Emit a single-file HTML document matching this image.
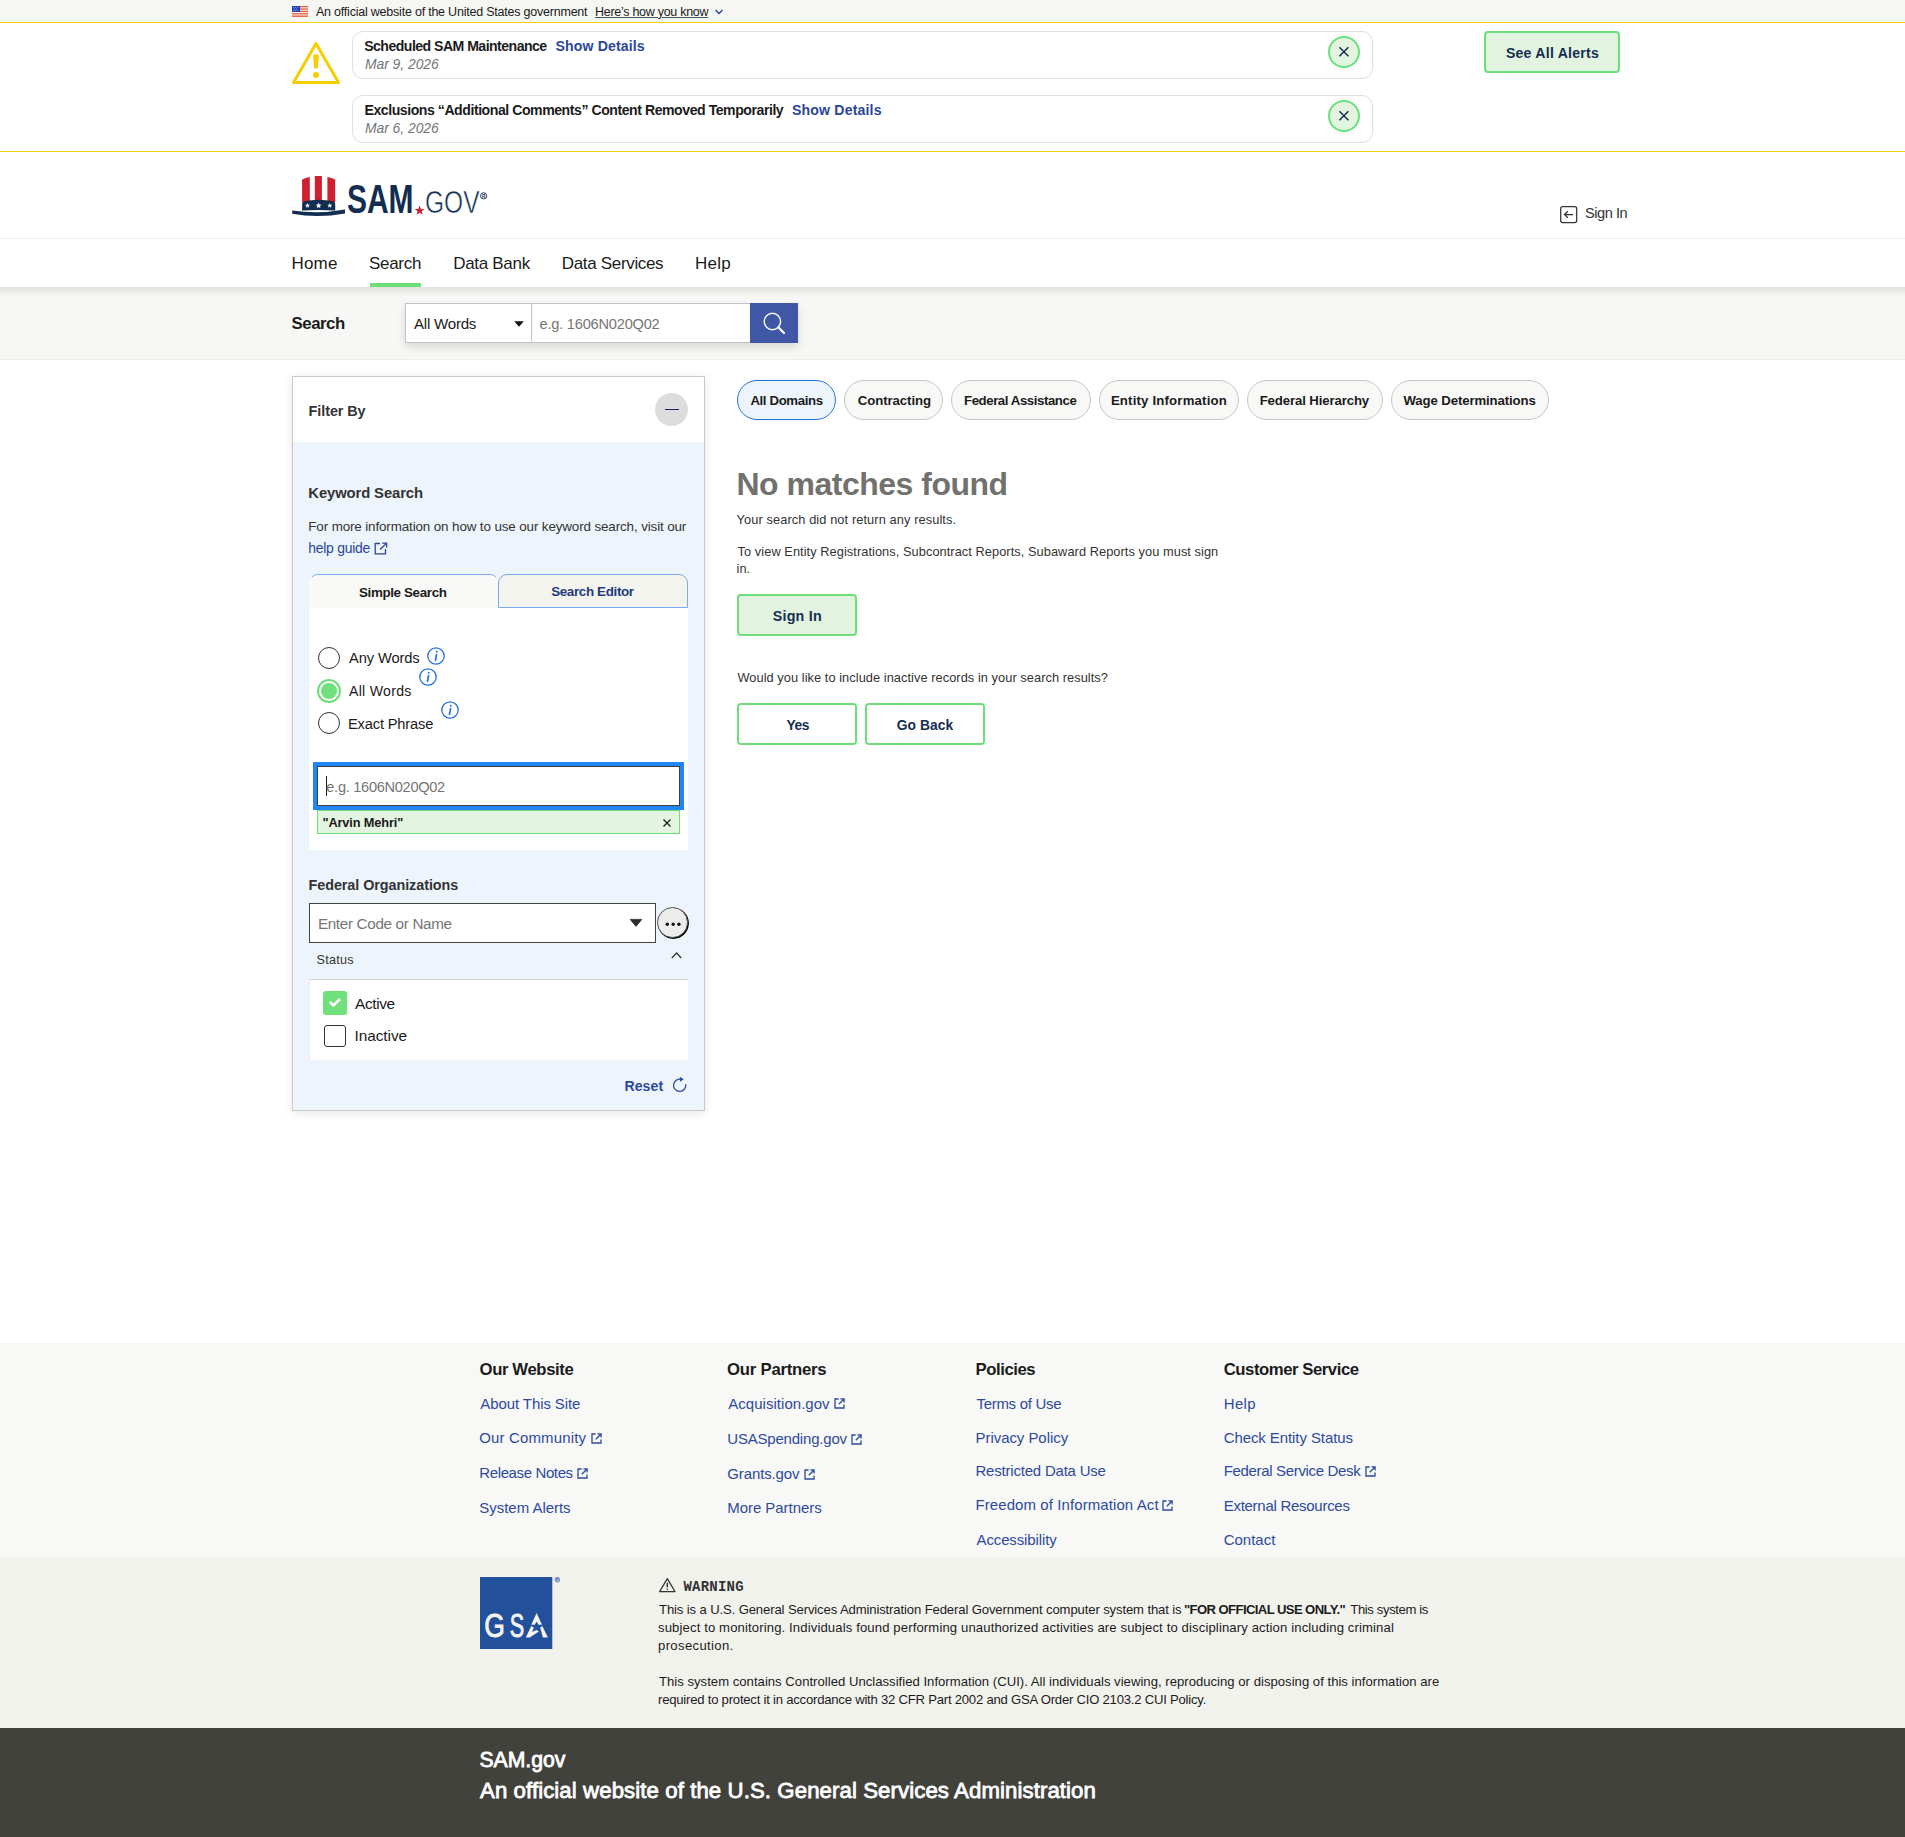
<!DOCTYPE html>
<html><head><meta charset="utf-8"><title>SAM.gov | Search</title>
<style>
*{box-sizing:border-box;margin:0;padding:0}
html,body{width:1905px;height:1837px;overflow:hidden;background:#fff}
body{position:relative;font-family:"Liberation Sans",sans-serif;color:#1b1b1b}
.a{position:absolute;white-space:nowrap}
svg.a{overflow:visible}
</style></head>
<body>
<!-- gov banner -->
<div class="a" style="left:0;top:0;width:1905px;height:22px;background:#f6f6f2"></div>
<div class="a" style="left:0;top:22px;width:1905px;height:1px;background:#f9cf0b"></div>
<svg class="a" style="left:292px;top:6px" width="16" height="11" viewBox="0 0 16 11">
<rect width="16" height="11" fill="#fff"/>
<g fill="#dc4a26"><rect y="0" width="16" height="0.9"/><rect y="1.7" width="16" height="0.9"/><rect y="3.4" width="16" height="0.9"/><rect y="5.1" width="16" height="0.9"/><rect y="6.9" width="16" height="0.9"/><rect y="8.6" width="16" height="0.9"/><rect y="10.2" width="16" height="0.8"/></g>
<rect width="8" height="6" fill="#1f3fae"/>
<g fill="#fff"><circle cx="1.6" cy="1.3" r=".45"/><circle cx="3.6" cy="1.3" r=".45"/><circle cx="5.6" cy="1.3" r=".45"/><circle cx="2.6" cy="3" r=".45"/><circle cx="4.6" cy="3" r=".45"/><circle cx="1.6" cy="4.7" r=".45"/><circle cx="3.6" cy="4.7" r=".45"/><circle cx="5.6" cy="4.7" r=".45"/></g>
</svg>
<svg class="a" style="left:714px;top:8px" width="10" height="8" viewBox="0 0 10 8"><path d="M1.5 2 L5 5.5 L8.5 2" fill="none" stroke="#2a4699" stroke-width="1.4"/></svg>

<!-- alerts -->
<svg class="a" style="left:290px;top:40px" width="52" height="46" viewBox="0 0 52 46">
<path d="M26 3.6 L48.5 42.5 L3.5 42.5 Z" fill="none" stroke="#f8cd00" stroke-width="3" stroke-linejoin="round"/>
<path d="M23.1 15.6 Q26 12.9 28.9 15.6 L27.8 28 Q26 29.6 24.2 28 Z" fill="#f8cd00"/>
<circle cx="26" cy="35" r="3" fill="#f8cd00"/>
</svg>
<div class="a" style="left:352px;top:31px;width:1021px;height:48px;border:1px solid #e0e0e0;border-radius:11px;background:#fff"></div>
<div class="a" style="left:1328px;top:36px;width:32px;height:32px;border-radius:50%;border:2px solid #6ddf78;background:#e2f4e0"></div>
<svg class="a" style="left:1328px;top:36px" width="32" height="32" viewBox="0 0 32 32"><path d="M11.4 11.2 L20.4 20.2 M20.4 11.2 L11.4 20.2" stroke="#162e51" stroke-width="1.5"/></svg>
<div class="a" style="left:352px;top:95px;width:1021px;height:48px;border:1px solid #e0e0e0;border-radius:11px;background:#fff"></div>
<div class="a" style="left:1328px;top:100px;width:32px;height:32px;border-radius:50%;border:2px solid #6ddf78;background:#e2f4e0"></div>
<svg class="a" style="left:1328px;top:100px" width="32" height="32" viewBox="0 0 32 32"><path d="M11.4 11.2 L20.4 20.2 M20.4 11.2 L11.4 20.2" stroke="#162e51" stroke-width="1.5"/></svg>
<div class="a" style="left:1484px;top:31px;width:136px;height:42px;border:2px solid #6ddf78;background:#e2f4e0;border-radius:4px"></div>
<div class="a" style="left:0;top:151px;width:1905px;height:1px;background:#f9cf0b"></div>

<!-- header logo -->
<svg class="a" style="left:285px;top:165px" width="210" height="60" viewBox="285 165 210 60">
<g fill="#d01f2e">
<path d="M302.1 179.6 Q305.5 177.7 309.8 177 L309.8 202.5 L302.1 202.5 Z"/>
<path d="M314.8 176 L321.9 176 L321.9 202.5 L314.8 202.5 Z"/>
<path d="M327.4 177 Q331.7 177.7 335.2 179.6 L335.2 202.5 L327.4 202.5 Z"/>
</g>
<path d="M302.1 204 Q302.1 201.6 304.5 201.2 Q318.6 198.2 332.8 201.2 Q335.2 201.6 335.2 204 L335.2 210.6 Q318.6 209.4 302.1 210.6 Z" fill="#112e51"/>
<g fill="#fff">
<path d="M307.5 203 l.7 1.7 1.8 .1 -1.4 1.1 .5 1.8 -1.6-1 -1.6 1 .5-1.8 -1.4-1.1 1.8-.1z"/>
<path d="M318.6 202.6 l.85 2 2.1 .15 -1.6 1.3 .5 2.1 -1.85-1.15 -1.85 1.15 .5-2.1 -1.6-1.3 2.1-.15z"/>
<path d="M329.8 203 l.7 1.7 1.8 .1 -1.4 1.1 .5 1.8 -1.6-1 -1.6 1 .5-1.8 -1.4-1.1 1.8-.1z"/>
</g>
<path d="M292.2 210.6 Q318.5 214.4 345 209.6 L345 213.4 Q318.5 218.4 292.2 213.8 Z" fill="#112e51"/>
<text x="347" y="213" font-family="Liberation Sans" font-weight="bold" font-size="40.5" fill="#112e51" textLength="66.5" lengthAdjust="spacingAndGlyphs">SAM</text>
<path d="M419.6 205.6 l1.25 3.35 3.55 .15 -2.8 2.2 .95 3.45 -2.95-2 -2.95 2 .95-3.45 -2.8-2.2 3.55-.15z" fill="#d01f2e"/>
<text x="425" y="213" font-family="Liberation Sans" font-size="30.5" fill="#112e51" stroke="#fff" stroke-width="0.55" textLength="54.5" lengthAdjust="spacingAndGlyphs">GOV</text>
<circle cx="483.6" cy="195.8" r="3.1" fill="none" stroke="#112e51" stroke-width="0.9"/>
<text x="482.1" y="197.6" font-family="Liberation Sans" font-size="4.8" font-weight="bold" fill="#112e51">R</text>
</svg>
<svg class="a" style="left:1559px;top:205px" width="20" height="19" viewBox="1559 205 20 19"><rect x="1560.7" y="206.7" width="16" height="15.8" rx="2" fill="none" stroke="#333" stroke-width="1.25"/><path d="M1573 214.5 H1564.6 M1567.8 211.2 L1564.5 214.5 L1567.8 217.8" fill="none" stroke="#333" stroke-width="1.25"/></svg>
<div class="a" style="left:0;top:238px;width:1905px;height:1px;background:#efefeb"></div>

<!-- nav -->
<div class="a" style="left:370px;top:283px;width:51px;height:4px;background:#6ddf78"></div>

<!-- search band -->
<div class="a" style="left:0;top:287px;width:1905px;height:73px;background:#f7f7f5;border-bottom:1px solid #efefea"></div>
<div class="a" style="left:0;top:287px;width:1905px;height:10px;background:linear-gradient(rgba(0,0,0,.09),rgba(0,0,0,0))"></div>
<div class="a" style="left:405px;top:303px;width:393px;height:40px;box-shadow:0 4px 9px rgba(0,0,0,.13)"></div>
<div class="a" style="left:405px;top:303px;width:127px;height:40px;background:#fff;border:1px solid #c4c4c4"></div>
<svg class="a" style="left:513px;top:320px" width="12" height="8" viewBox="0 0 12 8"><path d="M1.2 1.2 H10.8 L6 6.8 Z" fill="#111"/></svg>
<div class="a" style="left:531px;top:303px;width:220px;height:40px;background:#fff;border:1px solid #c4c4c4;border-left:1px solid #c4c4c4"></div>
<div class="a" style="left:750px;top:303px;width:48px;height:40px;background:#3f57a6"></div>
<svg class="a" style="left:750px;top:303px" width="48" height="40" viewBox="0 0 48 40"><circle cx="22.4" cy="18.5" r="8.2" fill="none" stroke="#fff" stroke-width="1.4"/><path d="M28.3 24.3 L34 30" stroke="#fff" stroke-width="2.2" stroke-linecap="round"/></svg>

<!-- sidebar -->
<div class="a" style="left:292px;top:376px;width:413px;height:735px;border:1px solid #c9c9c9;background:#edf4fb;box-shadow:0 2px 10px rgba(0,0,0,.10)"></div>
<div class="a" style="left:293px;top:377px;width:411px;height:65px;background:#fff"></div>
<div class="a" style="left:655px;top:393px;width:33px;height:33px;border-radius:50%;background:#dcdcdc"></div>
<div class="a" style="left:664.5px;top:409px;width:14.5px;height:1.2px;background:#162e51"></div>
<svg class="a" style="left:374px;top:542px" width="14" height="13" viewBox="0 0 14 13"><path d="M6 1.5 H1.2 V11.8 H11.5 V7" fill="none" stroke="#2a4699" stroke-width="1.3"/><path d="M8.2 1.1 H12.6 V5.5 M12.3 1.4 L6.2 7.5" fill="none" stroke="#2a4699" stroke-width="1.3"/></svg>

<!-- tabs + panel -->
<div class="a" style="left:309px;top:608px;width:379px;height:242px;background:#fff"></div>
<div class="a" style="left:309px;top:574px;width:190px;height:34px;background:#f9f9f7;border:1px solid;border-color:#7aaaf7 transparent transparent transparent;border-bottom:none;border-radius:9px 9px 0 0"></div>
<div class="a" style="left:498px;top:574px;width:190px;height:34px;background:#f3f4ee;border:1px solid #7aaaf7;border-radius:9px 9px 0 0"></div>

<!-- radios -->
<div class="a" style="left:318px;top:647px;width:22px;height:22px;border-radius:50%;border:1.3px solid #333;background:#fff"></div>
<div class="a" style="left:317px;top:679px;width:24px;height:24px;border-radius:50%;border:2px solid #6ddf78;background:#fff"></div>
<div class="a" style="left:321px;top:683px;width:16px;height:16px;border-radius:50%;background:#70e07b"></div>
<div class="a" style="left:318px;top:712px;width:22px;height:22px;border-radius:50%;border:1.3px solid #333;background:#fff"></div>
<svg class="a" style="left:427px;top:647px" width="18" height="18" viewBox="0 0 18 18"><circle cx="9" cy="9" r="8.2" fill="none" stroke="#2672de" stroke-width="1.3"/><path d="M9.8 4.6 v.2" stroke="#2672de" stroke-width="1.9" stroke-linecap="round"/><path d="M9.5 7.6 L8.5 13.4" stroke="#2672de" stroke-width="1.7" stroke-linecap="round"/></svg>
<svg class="a" style="left:419px;top:668px" width="18" height="18" viewBox="0 0 18 18"><circle cx="9" cy="9" r="8.2" fill="none" stroke="#2672de" stroke-width="1.3"/><path d="M9.8 4.6 v.2" stroke="#2672de" stroke-width="1.9" stroke-linecap="round"/><path d="M9.5 7.6 L8.5 13.4" stroke="#2672de" stroke-width="1.7" stroke-linecap="round"/></svg>
<svg class="a" style="left:441px;top:701px" width="18" height="18" viewBox="0 0 18 18"><circle cx="9" cy="9" r="8.2" fill="none" stroke="#2672de" stroke-width="1.3"/><path d="M9.8 4.6 v.2" stroke="#2672de" stroke-width="1.9" stroke-linecap="round"/><path d="M9.5 7.6 L8.5 13.4" stroke="#2672de" stroke-width="1.7" stroke-linecap="round"/></svg>

<!-- keyword input -->
<div class="a" style="left:313px;top:762px;width:371px;height:48px;border:4px solid #2386f5;background:#fff"></div>
<div class="a" style="left:317px;top:766px;width:363px;height:40px;border:1px solid #3d3d3d"></div>
<div class="a" style="left:326px;top:776px;width:1.3px;height:20px;background:#1b1b1b"></div>
<div class="a" style="left:317px;top:810px;width:363px;height:24px;background:#e3f4e0;border:1px solid #6ddf78"></div>
<svg class="a" style="left:662px;top:818px" width="10" height="10" viewBox="0 0 10 10"><path d="M1.5 1.5 L8.5 8.5 M8.5 1.5 L1.5 8.5" stroke="#1b1b1b" stroke-width="1.3"/></svg>

<!-- federal orgs -->
<div class="a" style="left:309px;top:903px;width:347px;height:40px;background:#fff;border:1px solid #454540"></div>
<svg class="a" style="left:629px;top:918px" width="14" height="10" viewBox="0 0 14 10"><path d="M1.2 1.4 H12.8 L7 8.4 Z" fill="#2d2d28" stroke="#2d2d28" stroke-width="0.8" stroke-linejoin="round"/></svg>
<div class="a" style="left:656.5px;top:907px;width:31px;height:31px;border-radius:50%;border:1.6px solid #555;background:#ececec;box-shadow:0.8px 0.8px 0 0.1px #000"></div>
<svg class="a" style="left:656px;top:907px" width="32" height="32" viewBox="0 0 32 32"><g fill="#111"><circle cx="11.3" cy="17.3" r="1.7"/><circle cx="17.2" cy="17.3" r="1.7"/><circle cx="22.9" cy="17.3" r="1.7"/></g></svg>
<svg class="a" style="left:670px;top:951px" width="13" height="9" viewBox="0 0 13 9"><path d="M1.8 7 L6.6 2 L11.2 7" fill="none" stroke="#333" stroke-width="1.2"/></svg>
<div class="a" style="left:309px;top:979px;width:379px;height:81px;background:#fff;border-top:1px solid #d6d6d6;border-left:1px solid #ececec"></div>
<div class="a" style="left:323px;top:991px;width:24px;height:24px;border-radius:3px;background:#70e07b"></div>
<svg class="a" style="left:323px;top:991px" width="24" height="24" viewBox="0 0 24 24"><path d="M6.8 10.8 L10.4 14.5 L17 8" fill="none" stroke="#fff" stroke-width="2.6"/></svg>
<div class="a" style="left:324px;top:1025px;width:22px;height:22px;border-radius:3px;border:1.5px solid #333;background:#fff"></div>
<svg class="a" style="left:671px;top:1075px" width="17" height="18" viewBox="0 0 17 18"><path d="M10.3 4.4 A6.1 6.1 0 1 0 14.5 8.4" fill="none" stroke="#2d4a9e" stroke-width="1.3" transform="rotate(8 8.5 10)"/><path d="M8.8 1.8 L12.8 4.2 L9 6.8 Z" fill="#2d4a9e"/></svg>

<!-- domain pills -->
<div class="a" style="left:737px;top:380px;width:99px;height:40px;border:1.3px solid #2672de;border-radius:20px;background:#edf4fb"></div>
<div class="a" style="left:844px;top:380px;width:99px;height:40px;border:1px solid #c6c6c6;border-radius:20px;background:#f8f8f6"></div>
<div class="a" style="left:951px;top:380px;width:140px;height:40px;border:1px solid #c6c6c6;border-radius:20px;background:#f8f8f6"></div>
<div class="a" style="left:1099px;top:380px;width:140px;height:40px;border:1px solid #c6c6c6;border-radius:20px;background:#f8f8f6"></div>
<div class="a" style="left:1247px;top:380px;width:136px;height:40px;border:1px solid #c6c6c6;border-radius:20px;background:#f8f8f6"></div>
<div class="a" style="left:1391px;top:380px;width:158px;height:40px;border:1px solid #c6c6c6;border-radius:20px;background:#f8f8f6"></div>

<!-- main buttons -->
<div class="a" style="left:737px;top:594px;width:120px;height:42px;border:2px solid #6ddf78;background:#e2f4e0;border-radius:4px"></div>
<div class="a" style="left:737px;top:703px;width:120px;height:42px;border:2px solid #6ddf78;background:#fff;border-radius:4px"></div>
<div class="a" style="left:865px;top:703px;width:120px;height:42px;border:2px solid #6ddf78;background:#fff;border-radius:4px"></div>

<!-- footer -->
<div class="a" style="left:0;top:1343px;width:1905px;height:214px;background:#f8f8f6"></div>
<div class="a" style="left:0;top:1557px;width:1905px;height:171px;background:#f2f2ed"></div>
<div class="a" style="left:0;top:1728px;width:1905px;height:109px;background:#42423d"></div>
<svg class="a" style="left:590.5px;top:1432.7px" width="11" height="11" viewBox="0 0 11 11"><path d="M4.6 1 H1 V10 H10 V6.4" fill="none" stroke="#2d4a9e" stroke-width="1.3"/><path d="M6.4 .9 H10.1 V4.6 M9.8 1.2 L4.8 6.2" fill="none" stroke="#2d4a9e" stroke-width="1.3"/></svg>
<svg class="a" style="left:577.0px;top:1467.6px" width="11" height="11" viewBox="0 0 11 11"><path d="M4.6 1 H1 V10 H10 V6.4" fill="none" stroke="#2d4a9e" stroke-width="1.3"/><path d="M6.4 .9 H10.1 V4.6 M9.8 1.2 L4.8 6.2" fill="none" stroke="#2d4a9e" stroke-width="1.3"/></svg>
<svg class="a" style="left:834.2px;top:1398.3px" width="11" height="11" viewBox="0 0 11 11"><path d="M4.6 1 H1 V10 H10 V6.4" fill="none" stroke="#2d4a9e" stroke-width="1.3"/><path d="M6.4 .9 H10.1 V4.6 M9.8 1.2 L4.8 6.2" fill="none" stroke="#2d4a9e" stroke-width="1.3"/></svg>
<svg class="a" style="left:850.5px;top:1433.5px" width="11" height="11" viewBox="0 0 11 11"><path d="M4.6 1 H1 V10 H10 V6.4" fill="none" stroke="#2d4a9e" stroke-width="1.3"/><path d="M6.4 .9 H10.1 V4.6 M9.8 1.2 L4.8 6.2" fill="none" stroke="#2d4a9e" stroke-width="1.3"/></svg>
<svg class="a" style="left:803.6px;top:1468.6px" width="11" height="11" viewBox="0 0 11 11"><path d="M4.6 1 H1 V10 H10 V6.4" fill="none" stroke="#2d4a9e" stroke-width="1.3"/><path d="M6.4 .9 H10.1 V4.6 M9.8 1.2 L4.8 6.2" fill="none" stroke="#2d4a9e" stroke-width="1.3"/></svg>
<svg class="a" style="left:1162.3px;top:1500.0px" width="11" height="11" viewBox="0 0 11 11"><path d="M4.6 1 H1 V10 H10 V6.4" fill="none" stroke="#2d4a9e" stroke-width="1.3"/><path d="M6.4 .9 H10.1 V4.6 M9.8 1.2 L4.8 6.2" fill="none" stroke="#2d4a9e" stroke-width="1.3"/></svg>
<svg class="a" style="left:1364.5px;top:1466.0px" width="11" height="11" viewBox="0 0 11 11"><path d="M4.6 1 H1 V10 H10 V6.4" fill="none" stroke="#2d4a9e" stroke-width="1.3"/><path d="M6.4 .9 H10.1 V4.6 M9.8 1.2 L4.8 6.2" fill="none" stroke="#2d4a9e" stroke-width="1.3"/></svg>

<!-- GSA logo -->
<svg class="a" style="left:480px;top:1577px" width="82" height="73" viewBox="480 1577 82 73">
<rect x="480" y="1577" width="72.3" height="72" fill="#23509b"/>
<g fill="#f4f4f0" stroke="#f4f4f0" stroke-width="0.9">
<text x="484.3" y="1636.9" font-family="Liberation Sans" font-size="32.8" textLength="20.6" lengthAdjust="spacingAndGlyphs">G</text>
<text x="509.7" y="1636.9" font-family="Liberation Sans" font-size="32.8" textLength="14.4" lengthAdjust="spacingAndGlyphs">S</text>
</g>
<g fill="#f4f4f0">
<path d="M536.6 1613 L542 1624.7 L538.5 1624.7 L536.6 1621.4 L534.7 1624.7 L531.3 1624.7 Z"/>
<path d="M540.2 1627.7 L542.3 1626 L547.9 1637.4 L542.9 1637.4 Z"/>
<path d="M531.3 1626 L533.9 1627.7 L532 1631.9 L536.6 1630 L538.9 1631.5 L529.7 1637.4 L525.8 1637.4 Z"/>
</g>
<circle cx="557.4" cy="1579.7" r="2.3" fill="none" stroke="#23509b" stroke-width="0.7"/>
<text x="556" y="1581.3" font-family="Liberation Sans" font-size="3.6" font-weight="bold" fill="#23509b">R</text>
</svg>
<svg class="a" style="left:658px;top:1577px" width="19" height="16" viewBox="0 0 19 16"><path d="M9.3 1.6 L17 14.6 H1.6 Z" fill="none" stroke="#333" stroke-width="1.2" stroke-linejoin="round"/><path d="M9.3 5.8 V10.3" stroke="#333" stroke-width="1.5"/><circle cx="9.3" cy="12.3" r=".8" fill="#333"/></svg>

<div class="a" style="left:316.0px;top:4px;font-size:12.5px;line-height:16px;color:#1b1b1b;letter-spacing:-0.220px">An official website of the United States government</div>
<div class="a" style="left:595.0px;top:4px;font-size:12.5px;line-height:16px;color:#1b1b1b;letter-spacing:-0.278px;text-decoration:underline;text-underline-offset:0.6px;text-decoration-color:#555;text-decoration-thickness:1px">Here’s how you know</div>
<div class="a" style="left:364.2px;top:37px;font-size:14.1px;line-height:18px;color:#1b1b1b;font-weight:bold;letter-spacing:-0.533px">Scheduled SAM Maintenance</div>
<div class="a" style="left:555.6px;top:37px;font-size:14.1px;line-height:18px;color:#2a4699;font-weight:bold;letter-spacing:0.127px">Show Details</div>
<div class="a" style="left:365.0px;top:55px;font-size:13.9px;line-height:18px;color:#71767a;font-style:italic;letter-spacing:-0.040px">Mar 9, 2026</div>
<div class="a" style="left:364.5px;top:101px;font-size:14.1px;line-height:18px;color:#1b1b1b;font-weight:bold;letter-spacing:-0.456px">Exclusions “Additional Comments” Content Removed Temporarily</div>
<div class="a" style="left:792.0px;top:101px;font-size:14.1px;line-height:18px;color:#2a4699;font-weight:bold;letter-spacing:0.164px">Show Details</div>
<div class="a" style="left:365.0px;top:119px;font-size:13.9px;line-height:18px;color:#71767a;font-style:italic;letter-spacing:-0.040px">Mar 6, 2026</div>
<div class="a" style="left:1505.9px;top:44px;font-size:14.1px;line-height:18px;color:#162e51;font-weight:bold;letter-spacing:0.238px">See All Alerts</div>
<div class="a" style="left:1584.9px;top:204px;font-size:14.6px;line-height:19px;color:#333;letter-spacing:-0.450px">Sign In</div>
<div class="a" style="left:291.6px;top:253px;font-size:17.01px;line-height:22px;color:#1b1b1b;letter-spacing:0.133px">Home</div>
<div class="a" style="left:369.0px;top:253px;font-size:17.01px;line-height:22px;color:#1b1b1b;letter-spacing:-0.300px">Search</div>
<div class="a" style="left:453.2px;top:253px;font-size:17.01px;line-height:22px;color:#1b1b1b;letter-spacing:-0.300px">Data Bank</div>
<div class="a" style="left:561.8px;top:253px;font-size:17.01px;line-height:22px;color:#1b1b1b;letter-spacing:-0.333px">Data Services</div>
<div class="a" style="left:694.9px;top:253px;font-size:17.01px;line-height:22px;color:#1b1b1b;letter-spacing:0.300px">Help</div>
<div class="a" style="left:291.6px;top:313px;font-size:16.8px;line-height:22px;color:#1b1b1b;font-weight:bold;letter-spacing:-0.480px">Search</div>
<div class="a" style="left:414.0px;top:314px;font-size:15.12px;line-height:20px;color:#1b1b1b;letter-spacing:-0.250px">All Words</div>
<div class="a" style="left:539.5px;top:315px;font-size:14.6px;line-height:19px;color:#757575;letter-spacing:-0.207px">e.g. 1606N020Q02</div>
<div class="a" style="left:308.6px;top:402px;font-size:14.39px;line-height:19px;color:#333;font-weight:bold;letter-spacing:-0.062px">Filter By</div>
<div class="a" style="left:308.3px;top:484px;font-size:14.83px;line-height:19px;color:#333;font-weight:bold;letter-spacing:-0.115px">Keyword Search</div>
<div class="a" style="left:308.3px;top:518px;font-size:13.4px;line-height:17px;color:#333;letter-spacing:-0.119px">For more information on how to use our keyword search, visit our</div>
<div class="a" style="left:308.3px;top:539px;font-size:13.95px;line-height:18px;color:#2a4699;letter-spacing:-0.267px">help guide</div>
<div class="a" style="left:359.0px;top:584px;font-size:13.4px;line-height:17px;color:#1b1b1b;font-weight:bold;letter-spacing:-0.367px">Simple Search</div>
<div class="a" style="left:551.2px;top:583px;font-size:13.4px;line-height:17px;color:#1f3a80;font-weight:bold;letter-spacing:-0.350px">Search Editor</div>
<div class="a" style="left:349.0px;top:649px;font-size:14.68px;line-height:19px;color:#1b1b1b;letter-spacing:-0.100px">Any Words</div>
<div class="a" style="left:349.0px;top:682px;font-size:14.1px;line-height:18px;color:#1b1b1b;letter-spacing:0.288px">All Words</div>
<div class="a" style="left:348.0px;top:715px;font-size:14.68px;line-height:19px;color:#1b1b1b;letter-spacing:-0.173px">Exact Phrase</div>
<div class="a" style="left:326.3px;top:778px;font-size:14.6px;line-height:19px;color:#757575;letter-spacing:-0.293px">e.g. 1606N020Q02</div>
<div class="a" style="left:322.5px;top:814px;font-size:12.79px;line-height:17px;color:#1b1b1b;font-weight:bold;letter-spacing:-0.133px">"Arvin Mehri"</div>
<div class="a" style="left:308.5px;top:876px;font-size:14.39px;line-height:19px;color:#333;font-weight:bold;letter-spacing:-0.060px">Federal Organizations</div>
<div class="a" style="left:317.9px;top:914px;font-size:15.26px;line-height:20px;color:#757575;letter-spacing:-0.335px">Enter Code or Name</div>
<div class="a" style="left:316.5px;top:952px;font-size:12.6px;line-height:16px;color:#333;letter-spacing:0.280px">Status</div>
<div class="a" style="left:355.1px;top:994px;font-size:15.41px;line-height:20px;color:#1b1b1b;letter-spacing:-0.400px">Active</div>
<div class="a" style="left:354.4px;top:1026px;font-size:15.41px;line-height:20px;color:#1b1b1b;letter-spacing:-0.043px">Inactive</div>
<div class="a" style="left:624.5px;top:1077px;font-size:14.1px;line-height:18px;color:#2d4a9e;font-weight:bold;letter-spacing:0.050px">Reset</div>
<div class="a" style="left:750.4px;top:392px;font-size:13.2px;line-height:17px;color:#1b1b1b;font-weight:bold;letter-spacing:-0.360px">All Domains</div>
<div class="a" style="left:857.8px;top:392px;font-size:13.2px;line-height:17px;color:#1b1b1b;font-weight:bold;letter-spacing:-0.080px">Contracting</div>
<div class="a" style="left:964.0px;top:392px;font-size:13.2px;line-height:17px;color:#1b1b1b;font-weight:bold;letter-spacing:-0.412px">Federal Assistance</div>
<div class="a" style="left:1110.9px;top:392px;font-size:13.2px;line-height:17px;color:#1b1b1b;font-weight:bold;letter-spacing:0.182px">Entity Information</div>
<div class="a" style="left:1259.7px;top:392px;font-size:13.2px;line-height:17px;color:#1b1b1b;font-weight:bold;letter-spacing:-0.119px">Federal Hierarchy</div>
<div class="a" style="left:1403.5px;top:392px;font-size:13.2px;line-height:17px;color:#1b1b1b;font-weight:bold;letter-spacing:-0.117px">Wage Determinations</div>
<div class="a" style="left:736.4px;top:463px;font-size:31.98px;line-height:42px;color:#71716d;font-weight:bold;letter-spacing:-0.473px">No matches found</div>
<div class="a" style="left:736.6px;top:511px;font-size:12.8px;line-height:17px;color:#333;letter-spacing:0.097px">Your search did not return any results.</div>
<div class="a" style="left:737.6px;top:543px;font-size:12.8px;line-height:17px;color:#333;letter-spacing:0.060px">To view Entity Registrations, Subcontract Reports, Subaward Reports you must sign</div>
<div class="a" style="left:736.6px;top:560px;font-size:12.8px;line-height:17px;color:#333">in.</div>
<div class="a" style="left:772.7px;top:607px;font-size:14.3px;line-height:19px;color:#162e51;font-weight:bold;letter-spacing:0.217px">Sign In</div>
<div class="a" style="left:737.4px;top:669px;font-size:12.8px;line-height:17px;color:#333;letter-spacing:0.058px">Would you like to include inactive records in your search results?</div>
<div class="a" style="left:786.4px;top:716px;font-size:13.81px;line-height:18px;color:#162e51;font-weight:bold;letter-spacing:-0.350px">Yes</div>
<div class="a" style="left:896.7px;top:716px;font-size:13.81px;line-height:18px;color:#162e51;font-weight:bold;letter-spacing:0.083px">Go Back</div>
<div class="a" style="left:479.6px;top:1359px;font-size:16.72px;line-height:22px;color:#1b1b1b;font-weight:bold;letter-spacing:-0.390px">Our Website</div>
<div class="a" style="left:727.1px;top:1359px;font-size:16.72px;line-height:22px;color:#1b1b1b;font-weight:bold;letter-spacing:-0.236px">Our Partners</div>
<div class="a" style="left:975.5px;top:1359px;font-size:16.72px;line-height:22px;color:#1b1b1b;font-weight:bold;letter-spacing:-0.429px">Policies</div>
<div class="a" style="left:1223.7px;top:1359px;font-size:16.72px;line-height:22px;color:#1b1b1b;font-weight:bold;letter-spacing:-0.447px">Customer Service</div>
<div class="a" style="left:480.3px;top:1394px;font-size:14.97px;line-height:19px;color:#2d4a9e;letter-spacing:-0.079px">About This Site</div>
<div class="a" style="left:479.3px;top:1428px;font-size:14.97px;line-height:19px;color:#2d4a9e;letter-spacing:0.158px">Our Community</div>
<div class="a" style="left:479.3px;top:1463px;font-size:14.97px;line-height:19px;color:#2d4a9e;letter-spacing:-0.367px">Release Notes</div>
<div class="a" style="left:479.3px;top:1498px;font-size:14.97px;line-height:19px;color:#2d4a9e;letter-spacing:-0.017px">System Alerts</div>
<div class="a" style="left:728.3px;top:1394px;font-size:14.97px;line-height:19px;color:#2d4a9e;letter-spacing:0.043px">Acquisition.gov</div>
<div class="a" style="left:727.3px;top:1429px;font-size:14.97px;line-height:19px;color:#2d4a9e;letter-spacing:-0.186px">USASpending.gov</div>
<div class="a" style="left:727.3px;top:1464px;font-size:14.97px;line-height:19px;color:#2d4a9e;letter-spacing:-0.111px">Grants.gov</div>
<div class="a" style="left:727.3px;top:1498px;font-size:14.97px;line-height:19px;color:#2d4a9e;letter-spacing:-0.042px">More Partners</div>
<div class="a" style="left:976.5px;top:1394px;font-size:14.97px;line-height:19px;color:#2d4a9e;letter-spacing:-0.291px">Terms of Use</div>
<div class="a" style="left:975.5px;top:1428px;font-size:14.97px;line-height:19px;color:#2d4a9e;letter-spacing:-0.038px">Privacy Policy</div>
<div class="a" style="left:975.5px;top:1461px;font-size:14.97px;line-height:19px;color:#2d4a9e;letter-spacing:-0.194px">Restricted Data Use</div>
<div class="a" style="left:975.5px;top:1495px;font-size:14.97px;line-height:19px;color:#2d4a9e;letter-spacing:0.100px">Freedom of Information Act</div>
<div class="a" style="left:976.5px;top:1530px;font-size:14.97px;line-height:19px;color:#2d4a9e;letter-spacing:-0.108px">Accessibility</div>
<div class="a" style="left:1223.7px;top:1394px;font-size:14.97px;line-height:19px;color:#2d4a9e;letter-spacing:0.400px">Help</div>
<div class="a" style="left:1223.7px;top:1428px;font-size:14.97px;line-height:19px;color:#2d4a9e;letter-spacing:-0.072px">Check Entity Status</div>
<div class="a" style="left:1223.7px;top:1461px;font-size:14.97px;line-height:19px;color:#2d4a9e;letter-spacing:-0.316px">Federal Service Desk</div>
<div class="a" style="left:1223.7px;top:1496px;font-size:14.97px;line-height:19px;color:#2d4a9e;letter-spacing:-0.259px">External Resources</div>
<div class="a" style="left:1223.7px;top:1530px;font-size:14.97px;line-height:19px;color:#2d4a9e;letter-spacing:0.017px">Contact</div>
<div class="a" style="left:683.4px;top:1578px;font-size:14px;line-height:18px;color:#333;font-weight:bold;font-family:'Liberation Mono',monospace;letter-spacing:0.233px">WARNING</div>
<div class="a" style="left:659.0px;top:1601px;font-size:13.1px;line-height:17px;color:#1b1b1b;letter-spacing:-0.123px">This is a U.S. General Services Administration Federal Government computer system that is</div>
<div class="a" style="left:1184.0px;top:1601px;font-size:13.1px;line-height:17px;color:#1b1b1b;font-weight:bold;letter-spacing:-0.596px">"FOR OFFICIAL USE ONLY."</div>
<div class="a" style="left:1350.3px;top:1601px;font-size:13.1px;line-height:17px;color:#1b1b1b;letter-spacing:-0.377px">This system is</div>
<div class="a" style="left:658.0px;top:1619px;font-size:13.1px;line-height:17px;color:#1b1b1b;letter-spacing:0.131px">subject to monitoring. Individuals found performing unauthorized activities are subject to disciplinary action including criminal</div>
<div class="a" style="left:658.0px;top:1637px;font-size:13.1px;line-height:17px;color:#1b1b1b;letter-spacing:0.355px">prosecution.</div>
<div class="a" style="left:659.0px;top:1673px;font-size:13.1px;line-height:17px;color:#1b1b1b;letter-spacing:0.022px">This system contains Controlled Unclassified Information (CUI). All individuals viewing, reproducing or disposing of this information are</div>
<div class="a" style="left:658.0px;top:1691px;font-size:13.1px;line-height:17px;color:#1b1b1b;letter-spacing:-0.219px">required to protect it in accordance with 32 CFR Part 2002 and GSA Order CIO 2103.2 CUI Policy.</div>
<div class="a" style="left:479.5px;top:1746px;font-size:21.2px;line-height:28px;color:#fff;letter-spacing:-0.033px;-webkit-text-stroke:0.8px #fff">SAM.gov</div>
<div class="a" style="left:480.0px;top:1776px;font-size:22.2px;line-height:29px;color:#fff;letter-spacing:0.094px;-webkit-text-stroke:0.8px #fff">An official website of the U.S. General Services Administration</div>
</body></html>
